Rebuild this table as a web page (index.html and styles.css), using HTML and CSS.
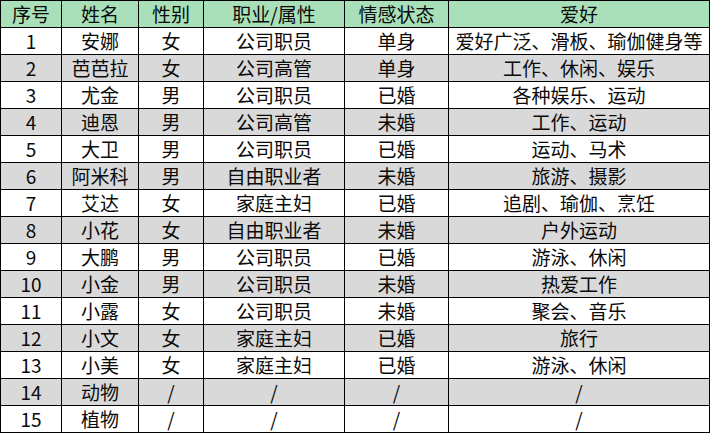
FILE: index.html
```html
<!DOCTYPE html>
<html lang="zh-CN">
<head>
<meta charset="utf-8">
<link rel="stylesheet" href="styles.css">
</head>
<body>
<table class="sheet">
  <colgroup>
    <col class="c1"><col class="c2"><col class="c3"><col class="c4"><col class="c5"><col class="c6">
  </colgroup>
  <thead>
    <tr><th>序号</th><th>姓名</th><th>性别</th><th>职业/属性</th><th>情感状态</th><th>爱好</th></tr>
  </thead>
  <tbody>
    <tr><td>1</td><td>安娜</td><td>女</td><td>公司职员</td><td>单身</td><td>爱好广泛、滑板、瑜伽健身等</td></tr>
    <tr class="alt"><td>2</td><td>芭芭拉</td><td>女</td><td>公司高管</td><td>单身</td><td>工作、休闲、娱乐</td></tr>
    <tr><td>3</td><td>尤金</td><td>男</td><td>公司职员</td><td>已婚</td><td>各种娱乐、运动</td></tr>
    <tr class="alt"><td>4</td><td>迪恩</td><td>男</td><td>公司高管</td><td>未婚</td><td>工作、运动</td></tr>
    <tr><td>5</td><td>大卫</td><td>男</td><td>公司职员</td><td>已婚</td><td>运动、马术</td></tr>
    <tr class="alt"><td>6</td><td>阿米科</td><td>男</td><td>自由职业者</td><td>未婚</td><td>旅游、摄影</td></tr>
    <tr><td>7</td><td>艾达</td><td>女</td><td>家庭主妇</td><td>已婚</td><td>追剧、瑜伽、烹饪</td></tr>
    <tr class="alt"><td>8</td><td>小花</td><td>女</td><td>自由职业者</td><td>未婚</td><td>户外运动</td></tr>
    <tr><td>9</td><td>大鹏</td><td>男</td><td>公司职员</td><td>已婚</td><td>游泳、休闲</td></tr>
    <tr class="alt"><td>10</td><td>小金</td><td>男</td><td>公司职员</td><td>未婚</td><td>热爱工作</td></tr>
    <tr><td>11</td><td>小露</td><td>女</td><td>公司职员</td><td>未婚</td><td>聚会、音乐</td></tr>
    <tr class="alt"><td>12</td><td>小文</td><td>女</td><td>家庭主妇</td><td>已婚</td><td>旅行</td></tr>
    <tr><td>13</td><td>小美</td><td>女</td><td>家庭主妇</td><td>已婚</td><td>游泳、休闲</td></tr>
    <tr class="alt"><td>14</td><td>动物</td><td>/</td><td>/</td><td>/</td><td>/</td></tr>
    <tr><td>15</td><td>植物</td><td>/</td><td>/</td><td>/</td><td>/</td></tr>
  </tbody>
</table>
</body>
</html>
```
FILE: styles.css
```css
html, body {
  margin: 0;
  padding: 0;
  background: #ffffff;
}
.sheet {
  border-collapse: collapse;
  table-layout: fixed;
  width: 709px;
  font-family: "Noto Sans CJK SC", "Noto Sans", sans-serif;
  font-size: 19px;
  color: #0a0a0a;
}
.c1 { width: 61px; }
.c2 { width: 77px; }
.c3 { width: 65px; }
.c4 { width: 141px; }
.c5 { width: 104px; }
.c6 { width: 261px; }
.sheet th,
.sheet td {
  border: 1px solid #000000;
  height: 26px;
  padding: 0;
  text-align: center;
  vertical-align: middle;
  line-height: 26px;
  white-space: nowrap;
  overflow: hidden;
}
.sheet th {
  background: #a9e0b9;
  font-weight: normal;
}
.sheet tr.alt td {
  background: #d9d9d9;
}
```
